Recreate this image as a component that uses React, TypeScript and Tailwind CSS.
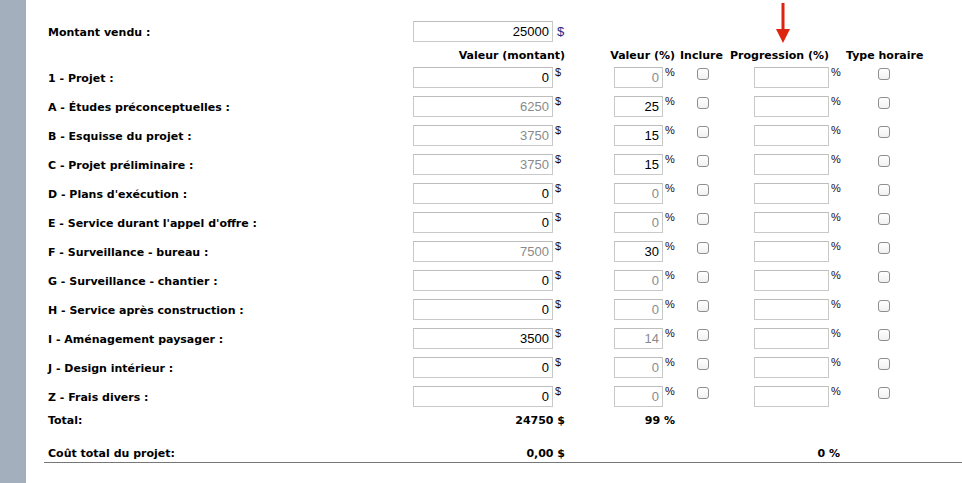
import React from "react";

type Row = {
  label: string;
  amount: string;
  amountGrey: boolean;
  pct: string;
  pctGrey: boolean;
};

const rows: Row[] = [
  { label: "1 - Projet :", amount: "0", amountGrey: false, pct: "0", pctGrey: true },
  { label: "A - Études préconceptuelles :", amount: "6250", amountGrey: true, pct: "25", pctGrey: false },
  { label: "B - Esquisse du projet :", amount: "3750", amountGrey: true, pct: "15", pctGrey: false },
  { label: "C - Projet préliminaire :", amount: "3750", amountGrey: true, pct: "15", pctGrey: false },
  { label: "D - Plans d'exécution :", amount: "0", amountGrey: false, pct: "0", pctGrey: true },
  { label: "E - Service durant l'appel d'offre :", amount: "0", amountGrey: false, pct: "0", pctGrey: true },
  { label: "F - Surveillance - bureau :", amount: "7500", amountGrey: true, pct: "30", pctGrey: false },
  { label: "G - Surveillance - chantier :", amount: "0", amountGrey: false, pct: "0", pctGrey: true },
  { label: "H - Service après construction :", amount: "0", amountGrey: false, pct: "0", pctGrey: true },
  { label: "I - Aménagement paysager :", amount: "3500", amountGrey: false, pct: "14", pctGrey: true },
  { label: "J - Design intérieur :", amount: "0", amountGrey: false, pct: "0", pctGrey: true },
  { label: "Z - Frais divers :", amount: "0", amountGrey: false, pct: "0", pctGrey: true },
];

const inputCls =
  "h-[21px] border border-[#c9c9c9] border-t-[#bdbdbd] bg-white text-right pr-[3px] text-[13px] font-normal font-['Liberation_Sans',Arial,sans-serif] outline-none";

function Box() {
  return (
    <span className="block w-[12px] h-[12px] rounded-[3px] border border-[#8e8e8e] bg-gradient-to-b from-white to-[#f1f1f1]" />
  );
}

function Sup({ children }: { children: React.ReactNode }) {
  return (
    <span className="self-start ml-[2px] -mt-[1px] text-[11px] leading-[13px] font-normal text-[#2a0505] font-['Liberation_Sans',Arial,sans-serif]">
      {children}
    </span>
  );
}

export default function App() {
  return (
    <div className="relative flex h-[483px] w-[962px] overflow-hidden bg-white font-['DejaVu_Sans',Verdana,sans-serif] text-[11px] font-bold text-black">
      <div className="w-[26px] shrink-0 bg-[#a4afbe]" />

      <svg className="absolute left-[775px] top-[3px]" width="16" height="41" viewBox="0 0 16 41">
        <rect x="6.5" y="0" width="3" height="28" fill="#dc2410" />
        <polygon points="1,26 15,26 8,40" fill="#dc2410" />
      </svg>

      <div className="flex flex-col pl-[20px] pt-[21px] grow">
        {/* Montant vendu */}
        <div className="flex h-[21px] items-center pl-[2px]">
          <div className="w-[365px] pt-[4px]">Montant vendu :</div>
          <input readOnly value="25000" className={`${inputCls} w-[140px] text-black`} />
          <span className="ml-[4px] text-[13px] font-normal text-[#1c2a8a] font-['Liberation_Sans',Arial,sans-serif]">$</span>
        </div>

        {/* Headers */}
        <div className="flex h-[25px] items-center pl-[2px] pt-[4px] whitespace-nowrap">
          <div className="w-[365px]" />
          <div className="w-[152px] text-right">Valeur (montant)</div>
          <div className="w-[41px]" />
          <div className="w-[69px] text-right">Valeur (%)</div>
          <div className="w-[5px]" />
          <div className="w-[50px]">Inclure</div>
          <div className="w-[116px]">Progression (%)</div>
          <div>Type horaire</div>
        </div>

        {/* Data rows */}
        <div className="flex flex-col gap-[8px] pl-[2px]">
          {rows.map((r) => (
            <div key={r.label} className="flex h-[21px] items-center font-normal">
              <div className="w-[365px] pt-[4px] font-bold whitespace-nowrap">{r.label}</div>
              <div className="flex w-[201px] h-[21px]">
                <input
                  readOnly
                  value={r.amount}
                  className={`${inputCls} w-[140px] ${r.amountGrey ? "text-[#8a8a8a]" : "text-black"}`}
                />
                <Sup>$</Sup>
              </div>
              <div className="flex w-[83px] h-[21px]">
                <input
                  readOnly
                  value={r.pct}
                  className={`${inputCls} w-[49px] ${r.pctGrey ? "text-[#8a8a8a]" : "text-black"}`}
                />
                <Sup>%</Sup>
              </div>
              <div className="w-[57px] h-[21px] pt-[1px]">
                <Box />
              </div>
              <div className="flex w-[124px] h-[21px]">
                <input readOnly value="" className={`${inputCls} w-[75px]`} />
                <Sup>%</Sup>
              </div>
              <div className="h-[21px] pt-[1px]">
                <Box />
              </div>
            </div>
          ))}
        </div>

        {/* Total */}
        <div className="mt-[7px] flex h-[13px] items-center pl-[2px] leading-[13px] whitespace-nowrap">
          <div className="w-[365px]">Total:</div>
          <div className="w-[152px] text-right">24750 $</div>
          <div className="w-[41px]" />
          <div className="w-[69px] text-right">99 %</div>
        </div>

        {/* Cout total */}
        <div className="mt-[19px] -ml-[2px] flex h-[17px] items-start border-b border-[#777] pl-[4px] pt-[1px] leading-[13px] whitespace-nowrap">
          <div className="w-[365px]">Coût total du projet:</div>
          <div className="w-[152px] text-right">0,00 $</div>
          <div className="w-[41px]" />
          <div className="w-[69px]" />
          <div className="w-[5px]" />
          <div className="w-[160px] text-right">0 %</div>
        </div>
      </div>
    </div>
  );
}
